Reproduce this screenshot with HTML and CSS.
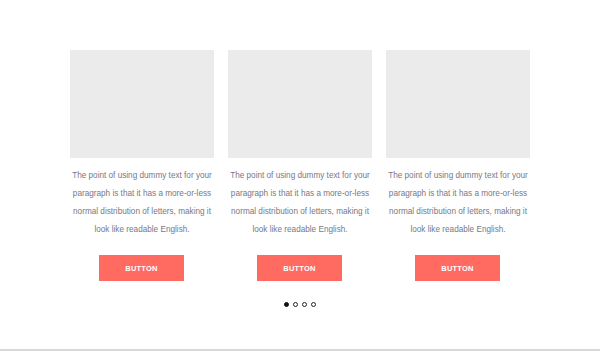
FILE: index.html
```html
<!DOCTYPE html>
<html>
<head>
<meta charset="utf-8">
<link rel="stylesheet" href="styles.css">
</head>
<body>
<div class="page">
  <div class="cards">
    <div class="card">
      <div class="thumb"></div>
      <p class="text">The point of using dummy text for your paragraph is that it has a more-or-less normal distribution of letters, making it look like readable English.</p>
      <a class="btn">BUTTON</a>
    </div>
    <div class="card">
      <div class="thumb"></div>
      <p class="text">The point of using dummy text for your paragraph is that it has a more-or-less normal distribution of letters, making it look like readable English.</p>
      <a class="btn">BUTTON</a>
    </div>
    <div class="card">
      <div class="thumb"></div>
      <p class="text">The point of using dummy text for your paragraph is that it has a more-or-less normal distribution of letters, making it look like readable English.</p>
      <a class="btn">BUTTON</a>
    </div>
  </div>
  <div class="dots">
    <span class="dot active"></span>
    <span class="dot"></span>
    <span class="dot"></span>
    <span class="dot"></span>
  </div>
</div>
</body>
</html>
```
FILE: styles.css
```css
html, body {
  margin: 0;
  padding: 0;
  background: #fff;
}
.page {
  width: 600px;
  height: 349px;
  border-bottom: 2px solid #d9d9d9;
  box-sizing: content-box;
  font-family: "Liberation Sans", Arial, sans-serif;
}
.cards {
  display: flex;
  justify-content: center;
  gap: 14px;
  padding-top: 50px;
}
.card {
  width: 144px;
  display: flex;
  flex-direction: column;
  align-items: center;
}
.thumb {
  width: 144px;
  height: 108px;
  background: #ebebeb;
}
.text {
  margin: 9px 0 0;
  font-size: 8.2px;
  line-height: 18px;
  color: #767888;
  text-align: center;
}
.btn {
  margin-top: 16px;
  margin-right: 1px;
  width: 85px;
  height: 26px;
  background: #ff6b60;
  color: #fff;
  font-size: 7.5px;
  font-weight: bold;
  display: flex;
  align-items: center;
  justify-content: center;
  letter-spacing: 0.2px;
}
.dots {
  display: flex;
  justify-content: center;
  gap: 4px;
  margin-top: 21px;
}
.dot {
  width: 5px;
  height: 5px;
  border-radius: 50%;
  box-sizing: border-box;
  border: 1px solid #222;
}
.dot.active {
  background: #111;
  border-color: #111;
}
```
